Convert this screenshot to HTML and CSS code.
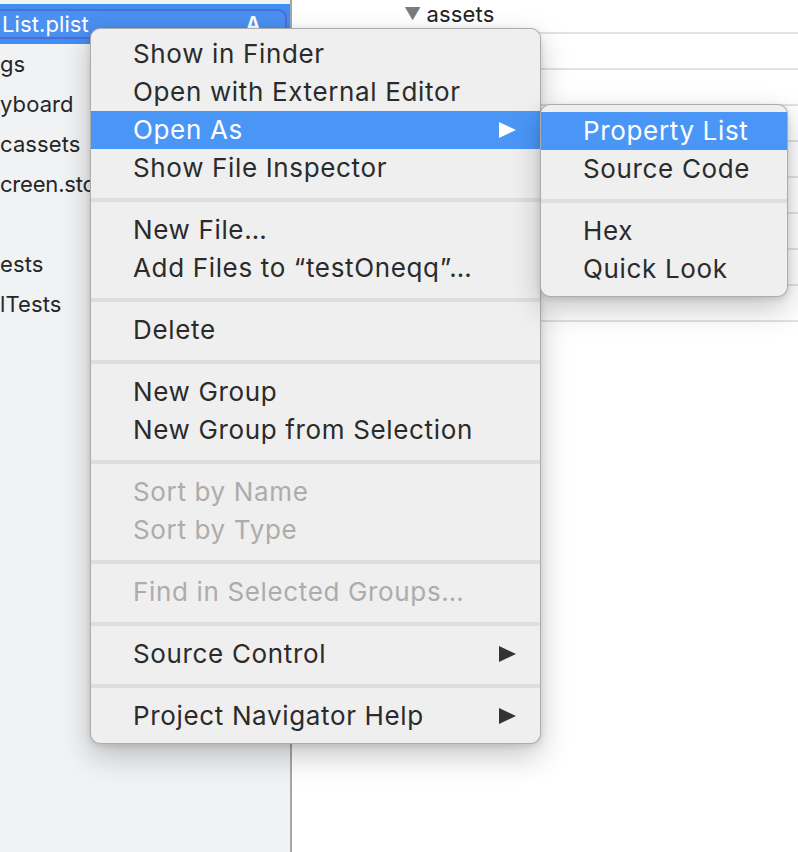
FILE: index.html
```html
<!DOCTYPE html>
<html>
<head>
<meta charset="utf-8">
<link rel="stylesheet" href="styles.css">
</head>
<body>
<div class="window">
  <aside class="sidebar">
    <div class="nav-row selected">
      <div class="sel-ring"><span class="name">List.plist</span><span class="badge">A</span></div>
    </div>
    <div class="nav-row"><span class="name">gs</span></div>
    <div class="nav-row"><span class="name">yboard</span></div>
    <div class="nav-row"><span class="name">cassets</span></div>
    <div class="nav-row"><span class="name tight">creen.sto</span></div>
    <div class="nav-row"><span class="name"></span></div>
    <div class="nav-row"><span class="name">ests</span></div>
    <div class="nav-row"><span class="name">lTests</span></div>
  </aside>
  <main class="content">
    <div class="row head"><span class="disclosure">▼</span><span>assets</span></div>
    <div class="row"></div>
    <div class="row"></div>
    <div class="row"></div>
    <div class="row"></div>
    <div class="row"></div>
    <div class="row"></div>
    <div class="row"></div>
    <div class="row"></div>
  </main>

  <div class="menu main-menu">
    <div class="item">Show in Finder</div>
    <div class="item">Open with External Editor</div>
    <div class="item active">Open As<span class="arrow"></span></div>
    <div class="item">Show File Inspector</div>
    <div class="sep"></div>
    <div class="item">New File…</div>
    <div class="item">Add Files to “testOneqq”…</div>
    <div class="sep"></div>
    <div class="item">Delete</div>
    <div class="sep"></div>
    <div class="item">New Group</div>
    <div class="item">New Group from Selection</div>
    <div class="sep"></div>
    <div class="item disabled">Sort by Name</div>
    <div class="item disabled">Sort by Type</div>
    <div class="sep"></div>
    <div class="item disabled">Find in Selected Groups…</div>
    <div class="sep"></div>
    <div class="item">Source Control<span class="arrow"></span></div>
    <div class="sep"></div>
    <div class="item">Project Navigator Help<span class="arrow"></span></div>
  </div>

  <div class="menu sub-menu">
    <div class="item active">Property List</div>
    <div class="item">Source Code</div>
    <div class="sep"></div>
    <div class="item">Hex</div>
    <div class="item">Quick Look</div>
  </div>
</div>
</body>
</html>
```

FILE: styles.css
```css
* { box-sizing: border-box; }
html, body { margin: 0; padding: 0; }
body {
  font-family: "Inter", "Noto Sans", "Liberation Sans", sans-serif;
  font-size: 22px;
  color: #2a2a2a;
  background: #ffffff;
}
.window {
  position: relative;
  width: 798px;
  height: 852px;
  display: flex;
  overflow: hidden;
}
.sidebar {
  width: 292px;
  flex: none;
  background: #f1f2f4;
  border-right: 2px solid #a6a6a6;
  padding-top: 4px;
  display: flex;
  flex-direction: column;
}
.nav-row {
  height: 40px;
  display: flex;
  align-items: center;
  white-space: nowrap;
  overflow: hidden;
  color: #262626;
  letter-spacing: 0.1px;
}
.name.tight {
  letter-spacing: -0.2px;
}
.nav-row.selected {
  background: #3f8ff2;
  color: #ffffff;
  padding-right: 3px;
}
.sel-ring {
  flex: 1;
  height: 30px;
  margin-left: -12px;
  padding-left: 12px;
  padding-right: 24px;
  border: 2px solid #4f6cd8;
  border-radius: 9px;
  background: #4a90f0;
  display: flex;
  align-items: center;
  justify-content: space-between;
}
.badge {
  font-weight: 600;
  font-size: 21px;
}
.content {
  flex: 1;
  display: flex;
  flex-direction: column;
}
.row {
  height: 36px;
  flex: none;
  border-bottom: 2px solid #e2e2e2;
}
.row.head {
  height: 34px;
  display: flex;
  align-items: center;
  padding-left: 112px;
  padding-bottom: 4px;
  color: #222;
  letter-spacing: 0.2px;
}
.disclosure {
  color: #7b7b7b;
  font-size: 17px;
  margin-right: 5px;
}
.menu {
  position: absolute;
  background: #efefef;
  border: 1px solid rgba(0, 0, 0, 0.28);
  border-radius: 10px;
  box-shadow: 0 12px 30px rgba(0, 0, 0, 0.22), 0 2px 6px rgba(0, 0, 0, 0.12);
  display: flex;
  flex-direction: column;
  font-size: 26px;
  letter-spacing: 0.65px;
}
.main-menu {
  left: 90px;
  top: 28px;
  width: 451px;
  padding: 6px 0 8px;
}
.sub-menu {
  left: 540px;
  top: 104px;
  width: 248px;
  padding: 7px 0 8px;
  z-index: 2;
}
.item {
  height: 38px;
  line-height: 38px;
  padding-left: 42px;
  padding-right: 24px;
  display: flex;
  align-items: center;
  justify-content: space-between;
  white-space: nowrap;
  color: #2b2b2b;
}
.item.active {
  background: #4a96f7;
  color: #ffffff;
}
.item.disabled {
  color: #acacac;
}
.sep {
  height: 4px;
  margin: 11px 0 9px;
  background: #dedede;
}
.arrow {
  width: 0;
  height: 0;
  border-top: 8px solid transparent;
  border-bottom: 8px solid transparent;
  border-left: 17px solid #333333;
}
.item.active .arrow {
  border-left-color: #ffffff;
}
```
